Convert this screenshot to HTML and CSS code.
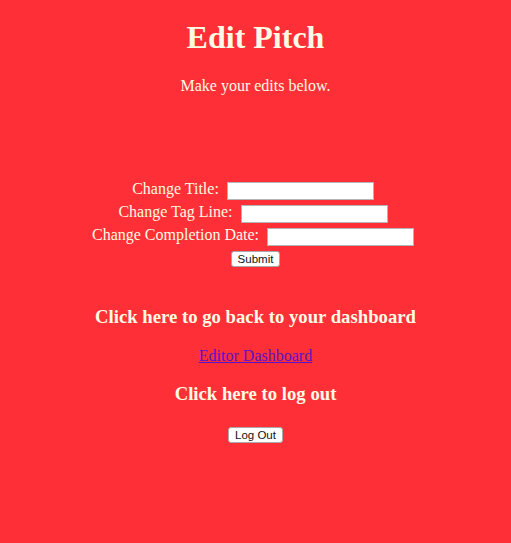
FILE: index.html
```html
<!DOCTYPE html>
<html>
<head>
<meta charset="utf-8">
<title>Edit Pitch</title>
<link rel="stylesheet" href="styles.css">
</head>
<body>
<div class="page">
  <h1 class="title">Edit Pitch</h1>
  <p class="intro">Make your edits below.</p>
  <form class="edit-form">
    <div class="field input-row"><label>Change Title: </label><input class="text-input" type="text"></div>
    <div class="field input-row"><label>Change Tag Line: </label><input class="text-input" type="text"></div>
    <div class="field input-row"><label>Change Completion Date: </label><input class="text-input" type="text"></div>
    <div class="field"><button class="btn" type="button">Submit</button></div>
  </form>
  <h3 class="section-heading first">Click here to go back to your dashboard</h3>
  <p class="link-row"><a class="dash-link" href="#">Editor Dashboard</a></p>
  <h3 class="section-heading">Click here to log out</h3>
  <div class="logout-row"><button class="btn" type="button">Log Out</button></div>
</div>
</body>
</html>
```

FILE: styles.css
```css
html, body {
  margin: 0;
  padding: 0;
  background: #ff2f37;
}
body {
  min-height: 543px;
  font-family: "Liberation Serif", "Times New Roman", serif;
  font-size: 16px;
  color: #fffbe4;
  text-align: center;
}
.page {
  padding: 1px 8px 40px;
}
.title {
  font-size: 32px;
  font-weight: bold;
  margin: 18px 0 0;
  line-height: 37px;
}
.intro {
  margin: 21px 0 0;
  line-height: 18px;
}
.edit-form {
  margin: 82px 0 0;
}
.field {
  height: 23px;
  line-height: 23px;
}
.input-row {
  padding-right: 5px;
}
.field label {
  margin-right: 4px;
}
.text-input {
  box-sizing: border-box;
  width: 147px;
  height: 18px;
  border: 1px solid #b5b5b5;
  background: #fff;
  padding: 0 2px;
  vertical-align: -1px;
  margin: 0;
}
.btn {
  box-sizing: border-box;
  font-family: "Liberation Sans", Arial, sans-serif;
  font-size: 11.5px;
  color: #111;
  background: #fff;
  border: 1px solid #a9a9a9;
  border-radius: 3px;
  height: 16px;
  padding: 0 6px;
  line-height: 14px;
  vertical-align: middle;
}
.section-heading {
  font-size: 18.72px;
  font-weight: bold;
  margin: 0;
  line-height: 22px;
}
.section-heading.first {
  margin-top: 37px;
}
.link-row {
  margin: 19px 0 0;
  line-height: 18px;
}
.dash-link {
  color: #5a13c9;
  text-decoration: underline;
}
.link-row + .section-heading {
  margin-top: 18px;
}
.logout-row {
  margin-top: 20px;
}
```
